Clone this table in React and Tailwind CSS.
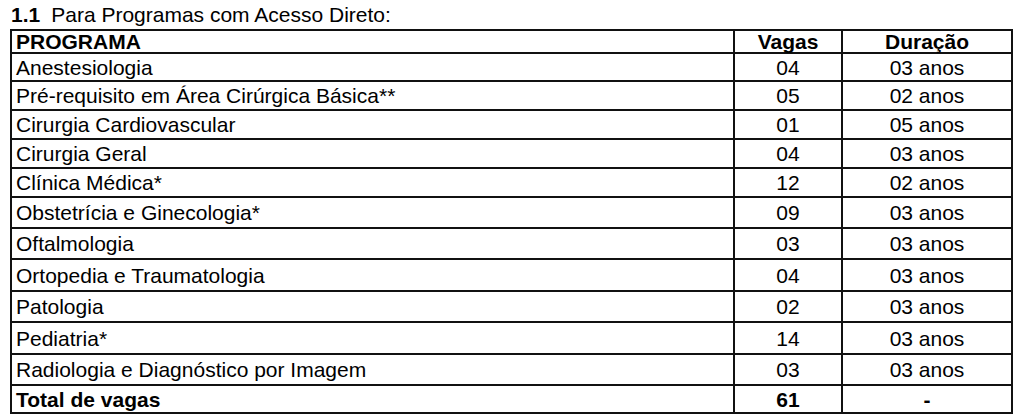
const programas = [
  { nome: 'Anestesiologia', vagas: '04', duracao: '03 anos', h: 'h-[28px]' },
  { nome: 'Pré-requisito em Área Cirúrgica Básica**', vagas: '05', duracao: '02 anos', h: 'h-[29px]' },
  { nome: 'Cirurgia Cardiovascular', vagas: '01', duracao: '05 anos', h: 'h-[29px]' },
  { nome: 'Cirurgia Geral', vagas: '04', duracao: '03 anos', h: 'h-[29px]' },
  { nome: 'Clínica Médica*', vagas: '12', duracao: '02 anos', h: 'h-[29px]' },
  { nome: 'Obstetrícia e Ginecologia*', vagas: '09', duracao: '03 anos', h: 'h-[31px]' },
  { nome: 'Oftalmologia', vagas: '03', duracao: '03 anos', h: 'h-[31px]' },
  { nome: 'Ortopedia e Traumatologia', vagas: '04', duracao: '03 anos', h: 'h-[32px]' },
  { nome: 'Patologia', vagas: '02', duracao: '03 anos', h: 'h-[31px]' },
  { nome: 'Pediatria*', vagas: '14', duracao: '03 anos', h: 'h-[32px]' },
  { nome: 'Radiologia e Diagnóstico por Imagem', vagas: '03', duracao: '03 anos', h: 'h-[31px]' },
];

function Row({ h, nome, vagas, duracao, bold }) {
  const weight = bold ? 'font-bold' : 'font-normal';
  return (
    <div className={`flex ${h} ${weight}`}>
      <div className="w-[723px] flex items-center pl-[4px] border-r-2 border-b-2 border-[#111]">
        {nome}
      </div>
      <div className="w-[108px] flex items-center justify-center border-r-2 border-b-2 border-[#111]">
        {vagas}
      </div>
      <div className="w-[170px] flex items-center justify-center border-r-2 border-b-2 border-[#111]">
        {duracao}
      </div>
    </div>
  );
}

export default function App() {
  return (
    <div
      className="w-[1024px] h-[420px] overflow-hidden bg-white text-black text-[21px] leading-none"
      style={{ fontFamily: '"Liberation Sans", Arial, sans-serif' }}
    >
      {/* Section title */}
      <div className="h-[29px] pl-[11px] flex items-center">
        <span className="font-bold">1.1</span>
        <span className="ml-[11px]">Para Programas com Acesso Direto:</span>
      </div>

      {/* Table */}
      <div className="ml-[10px] w-[1003px] border-l-2 border-t-2 border-[#111]">
        <Row h="h-[23px]" nome="PROGRAMA" vagas="Vagas" duracao="Duração" bold />
        {programas.map((p) => (
          <Row key={p.nome} {...p} />
        ))}
        <Row h="h-[28px]" nome="Total de vagas" vagas="61" duracao="-" bold />
      </div>
    </div>
  );
}
